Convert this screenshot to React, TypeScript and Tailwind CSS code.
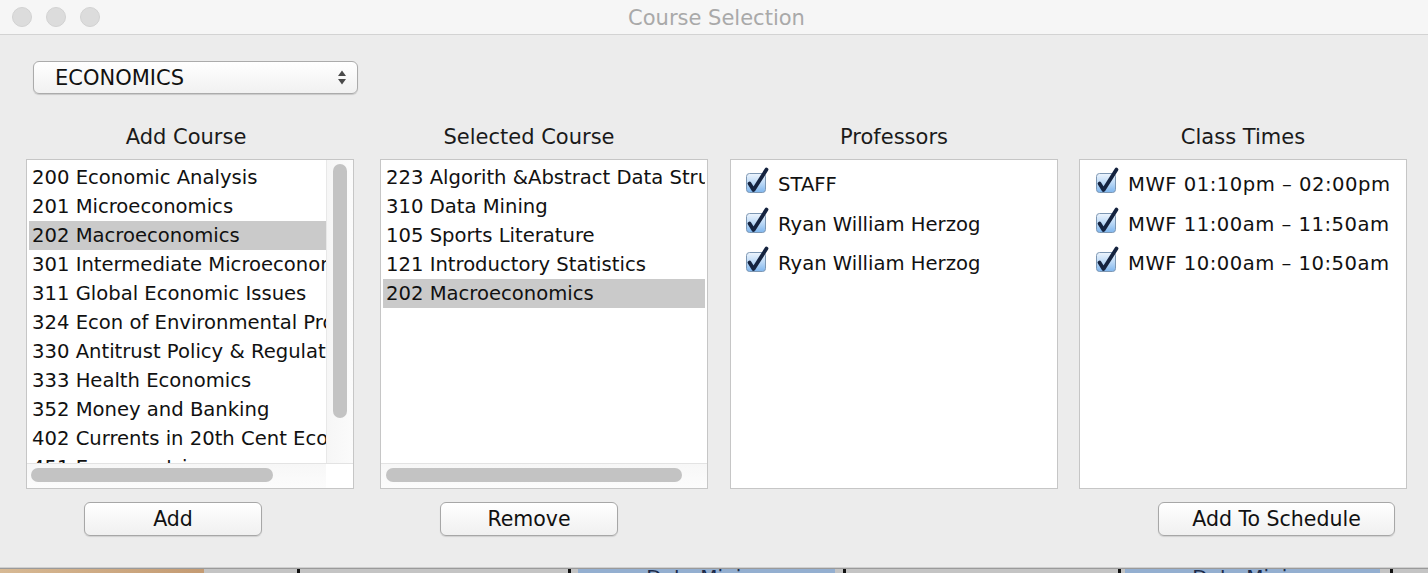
import React from "react";

const FONT = { fontFamily: '"DejaVu Sans", "Liberation Sans", sans-serif' };

const addCourses = [
  "200 Economic Analysis",
  "201 Microeconomics",
  "202 Macroeconomics",
  "301 Intermediate Microeconomics",
  "311 Global Economic Issues",
  "324 Econ of Environmental Protection",
  "330 Antitrust Policy & Regulation",
  "333 Health Economics",
  "352 Money and Banking",
  "402 Currents in 20th Cent Economics",
  "451 Econometrics",
];

const selectedCourses = [
  "223 Algorith &Abstract Data Structures",
  "310 Data Mining",
  "105 Sports Literature",
  "121 Introductory Statistics",
  "202 Macroeconomics",
];

const professors = ["STAFF", "Ryan William Herzog", "Ryan William Herzog"];
const times = ["MWF 01:10pm – 02:00pm", "MWF 11:00am – 11:50am", "MWF 10:00am – 10:50am"];

function CheckBox() {
  return (
    <svg width="26" height="28" viewBox="0 0 26 28" className="shrink-0 overflow-visible">
      <defs>
        <linearGradient id="cbg" x1="0" y1="0" x2="0" y2="1">
          <stop offset="0" stopColor="#eef5fd" />
          <stop offset="0.5" stopColor="#bcd9f6" />
          <stop offset="1" stopColor="#7fb6ee" />
        </linearGradient>
      </defs>
      <rect x="1.5" y="5.5" width="19" height="19" rx="3" fill="url(#cbg)" stroke="#7d97b3" strokeWidth="1" />
      <path d="M4.5 15.5 L8.5 22 L21.5 1.5" fill="none" stroke="#15233f" strokeWidth="3.8" strokeLinecap="round" strokeLinejoin="round" />
    </svg>
  );
}

function Button({ label, className }: { label: string; className: string }) {
  return (
    <div
      className={`h-[34px] rounded-[6px] border border-[#a7a7a7] bg-gradient-to-b from-[#ffffff] to-[#f0f0f0] shadow-[0_1px_1px_rgba(0,0,0,0.12)] flex items-center justify-center text-[20.5px] text-[#111] ${className}`}
    >
      {label}
    </div>
  );
}

function Header({ label, className = "" }: { label: string; className?: string }) {
  return (
    <div className={`h-[35px] flex items-start justify-center text-[21px] text-[#1a1a1a] leading-[24px] pt-[1px] ${className}`}>
      {label}
    </div>
  );
}

export default function App() {
  return (
    <div className="w-[1428px] h-[573px] bg-[#ececec] flex flex-col overflow-hidden" style={FONT}>
      {/* Title bar */}
      <div className="h-[35px] shrink-0 bg-[#f6f6f6] border-b border-[#d3d3d3] flex items-center relative">
        <div className="flex items-center gap-[14px] pl-[12px]">
          <div className="w-[20px] h-[20px] rounded-full bg-[#dcdcdc] border border-[#d2d2d2]" />
          <div className="w-[20px] h-[20px] rounded-full bg-[#dcdcdc] border border-[#d2d2d2]" />
          <div className="w-[20px] h-[20px] rounded-full bg-[#dcdcdc] border border-[#d2d2d2]" />
        </div>
        <div className="flex-1 flex justify-center pr-[95px] pt-[3px] text-[21px] text-[#a9a9a9]">Course Selection</div>
      </div>

      {/* Body */}
      <div className="flex-1 flex flex-col">
        {/* Dropdown */}
        <div className="pt-[26px] pl-[33px]">
          <div className="w-[325px] h-[33px] rounded-[6px] border border-[#ababab] bg-gradient-to-b from-[#ffffff] to-[#f1f1f1] shadow-[0_1px_1px_rgba(0,0,0,0.15)] flex items-center pl-[21px] pr-[10px]">
            <span className="flex-1 text-[21px] text-[#111] pt-[2px]">ECONOMICS</span>
            <svg width="10" height="17" viewBox="0 0 10 17">
              <path d="M5 1.5 L9 7 L1 7 Z" fill="#4a4a4a" />
              <path d="M5 15.5 L9 10 L1 10 Z" fill="#4a4a4a" />
            </svg>
          </div>
        </div>

        {/* Columns */}
        <div className="flex pt-[30px] pl-[26px]">
          {/* Col 1 */}
          <div className="w-[328px] flex flex-col">
            <Header label="Add Course" className="pr-[8px]" />
            <div className="h-[330px] border border-[#c6c6c6] bg-white flex flex-col">
              <div className="flex-1 flex min-h-0">
                <div className="flex-1 overflow-hidden pt-[3px] pl-[2px]">
                  {addCourses.map((c) => (
                    <div
                      key={c}
                      className={`h-[29px] leading-[29px] pl-[3px] whitespace-nowrap text-[19.6px] text-[#111] ${
                        c === "202 Macroeconomics" ? "bg-[#cacaca]" : ""
                      }`}
                    >
                      {c}
                    </div>
                  ))}
                </div>
                <div className="w-[27px] shrink-0 border-l border-[#e8e8e8] bg-gradient-to-r from-[#f6f6f6] to-[#fbfbfb] pt-[4px] pl-[6px]">
                  <div className="w-[14px] h-[254px] rounded-full bg-[#c3c3c3]" />
                </div>
              </div>
              <div className="h-[25px] shrink-0 flex border-t border-[#e3e3e3]">
                <div className="flex-1 bg-gradient-to-b from-[#f7f7f7] to-[#fcfcfc] pt-[4px] pl-[4px]">
                  <div className="w-[242px] h-[14px] rounded-full bg-[#c3c3c3]" />
                </div>
                <div className="w-[27px] bg-white" />
              </div>
            </div>
            <div className="pt-[13px] pl-[58px]">
              <Button label="Add" className="w-[178px]" />
            </div>
          </div>

          {/* Col 2 */}
          <div className="w-[328px] ml-[26px] flex flex-col">
            <Header label="Selected Course" className="pr-[30px]" />
            <div className="h-[330px] border border-[#c6c6c6] bg-white flex flex-col">
              <div className="flex-1 overflow-hidden pt-[3px] pl-[2px] pr-[2px] min-h-0">
                {selectedCourses.map((c) => (
                  <div
                    key={c}
                    className={`h-[29px] leading-[29px] pl-[3px] whitespace-nowrap overflow-hidden text-[19.6px] text-[#111] ${
                      c === "202 Macroeconomics" ? "bg-[#cacaca]" : ""
                    }`}
                  >
                    {c}
                  </div>
                ))}
              </div>
              <div className="h-[25px] shrink-0 border-t border-[#e3e3e3] bg-gradient-to-b from-[#f7f7f7] to-[#fcfcfc] pt-[4px] pl-[5px]">
                <div className="w-[296px] h-[14px] rounded-full bg-[#c3c3c3]" />
              </div>
            </div>
            <div className="pt-[13px] pl-[60px]">
              <Button label="Remove" className="w-[178px]" />
            </div>
          </div>

          {/* Col 3 */}
          <div className="w-[328px] ml-[22px] flex flex-col">
            <Header label="Professors" />
            <div className="h-[330px] border border-[#c6c6c6] bg-white pt-[8px] pl-[14px]">
              {professors.map((p, i) => (
                <div key={i} className="h-[39.5px] flex items-start gap-[7px]">
                  <CheckBox />
                  <span className="text-[19.6px] text-[#111] leading-[28px] pt-[3px]">{p}</span>
                </div>
              ))}
            </div>
          </div>

          {/* Col 4 */}
          <div className="w-[328px] ml-[21px] flex flex-col">
            <Header label="Class Times" />
            <div className="h-[330px] border border-[#c6c6c6] bg-white pt-[8px] pl-[15px]">
              {times.map((t, i) => (
                <div key={i} className="h-[39.5px] flex items-start gap-[7px]">
                  <CheckBox />
                  <span className="text-[19.6px] text-[#111] leading-[28px] pt-[3px] whitespace-nowrap tracking-[0.5px]">{t}</span>
                </div>
              ))}
            </div>
            <div className="pt-[13px] pl-[79px]">
              <Button label="Add To Schedule" className="w-[237px]" />
            </div>
          </div>
        </div>
      </div>

      {/* Window bottom edge and background window peeking */}
      <div className="h-[1px] shrink-0 bg-[#cfcfcf]" />
      <div className="h-[5px] shrink-0 flex overflow-hidden border-t border-[#9a9a9a]">
        <div className="w-[204px] bg-gradient-to-r from-[#d7b994] to-[#c49b73]" />
        <div className="w-[93px] bg-[#c4c4c4]" />
        <div className="w-[3px] bg-[#111]" />
        <div className="w-[268px] bg-[#c4c4c4]" />
        <div className="w-[3px] bg-[#111]" />
        <div className="w-[7px] bg-[#c4c4c4]" />
        <div className="w-[257px] bg-[#94afd0] flex justify-center overflow-hidden">
          <span className="text-[20px] leading-[20px] text-[#1c2b4a] mt-[-2px] whitespace-nowrap">Data Mining</span>
        </div>
        <div className="w-[8px] bg-[#c4c4c4]" />
        <div className="w-[3px] bg-[#111]" />
        <div className="w-[272px] bg-[#c4c4c4]" />
        <div className="w-[3px] bg-[#111]" />
        <div className="w-[4px] bg-[#c4c4c4]" />
        <div className="w-[255px] bg-[#94afd0] flex justify-center overflow-hidden">
          <span className="text-[20px] leading-[20px] text-[#1c2b4a] mt-[-2px] whitespace-nowrap">Data Mining</span>
        </div>
        <div className="w-[10px] bg-[#c4c4c4]" />
        <div className="w-[3px] bg-[#111]" />
        <div className="flex-1 bg-[#c4c4c4]" />
      </div>
    </div>
  );
}
